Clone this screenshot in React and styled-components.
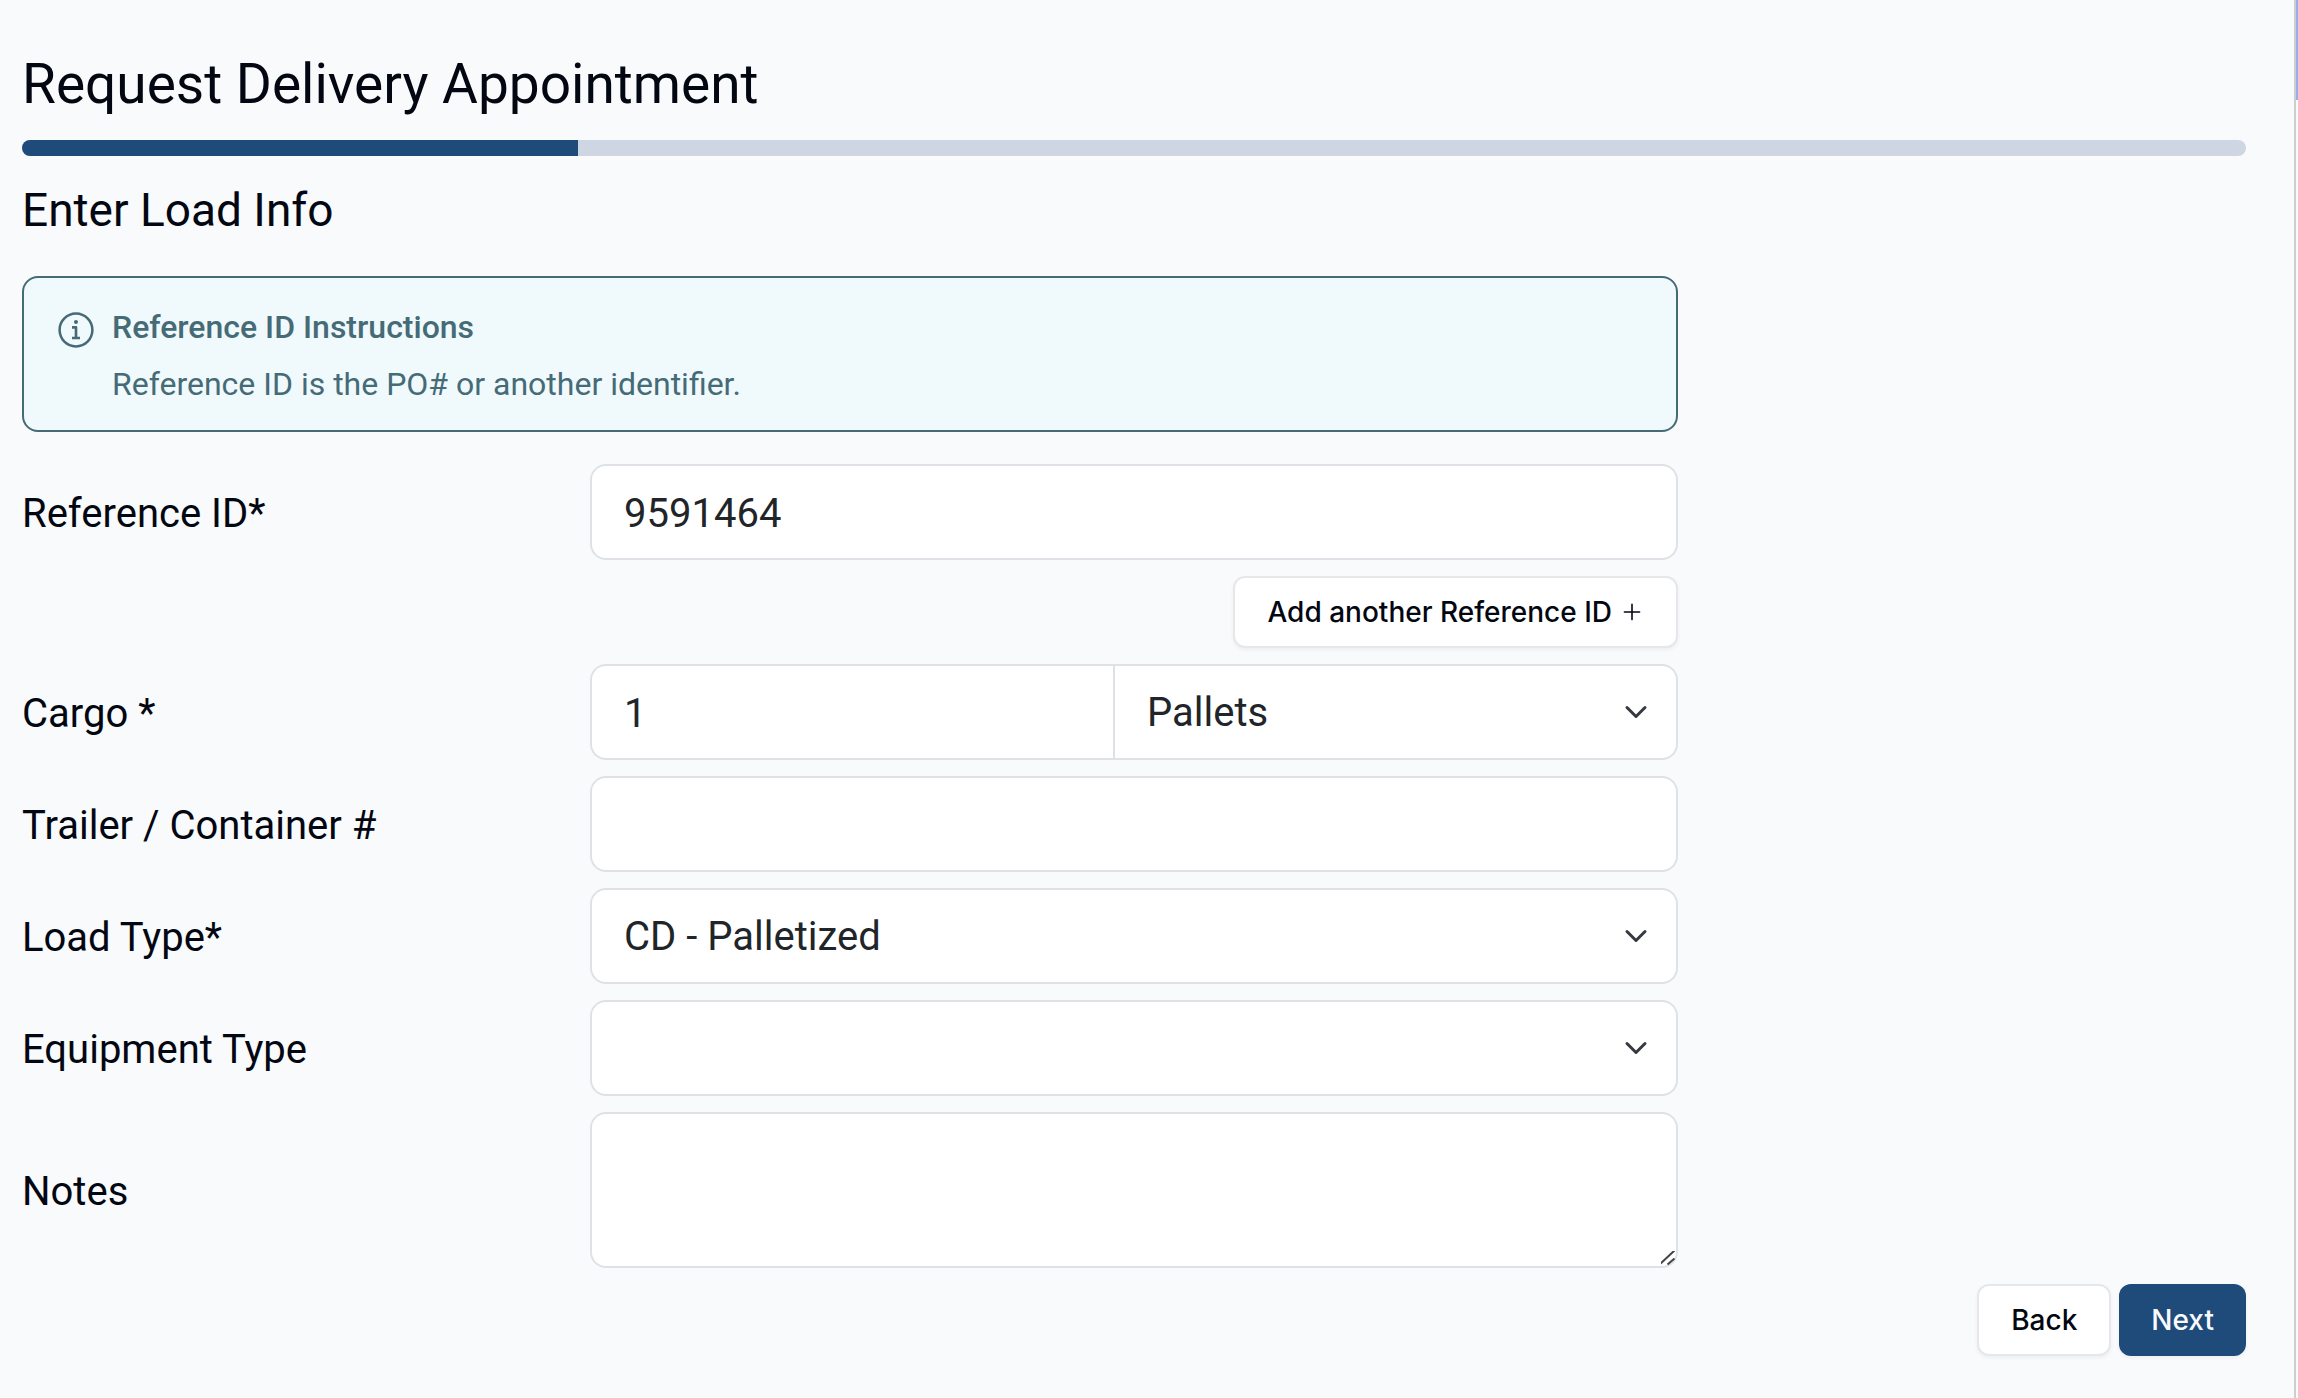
import React, { useState } from 'react';
import styled, { createGlobalStyle } from 'styled-components';
import { RxInfoCircled, RxPlus } from 'react-icons/rx';

const chevron = `url("data:image/svg+xml,%3csvg xmlns='http://www.w3.org/2000/svg' viewBox='0 0 16 16'%3e%3cpath fill='none' stroke='%23343a40' stroke-linecap='round' stroke-linejoin='round' stroke-width='2' d='m2 5 6 6 6-6'/%3e%3c/svg%3e")`;
const grip = `url("data:image/svg+xml,%3csvg xmlns='http://www.w3.org/2000/svg' viewBox='0 0 18 18'%3e%3cpath fill='none' stroke='%23444' stroke-width='2' d='M0 15 15 1M8 15l7-6'/%3e%3c/svg%3e")`;

const GlobalStyle = createGlobalStyle`
    *, *::before, *::after {
        box-sizing: border-box;
    }

    body {
        margin: 0;
        background: #f9fafc;
        color: #030712;
        font-family: Roboto, "Liberation Sans", sans-serif;
        font-size: 40px;
        line-height: 60px;
    }

    input, select, textarea {
        font-family: inherit;
        margin: 0;
    }
`;

const Shell = styled.div`
    display: flex;
    min-height: 100vh;
`;

const Page = styled.main`
    flex: 1;
    min-width: 0;
    padding: 50px 48px 42px 22px;
    border-right: 2px solid #cfcfcf;
`;

const ScrollRail = styled.div`
    width: 2px;
    background: #f9fafc;
`;

const ScrollThumb = styled.div`
    height: 100px;
    background: #94aff0;
`;

const Title = styled.h1`
    margin: 0 0 22px;
    font-size: 55px;
    line-height: 68px;
    font-weight: 400;
`;

const ProgressTrack = styled.div`
    height: 16px;
    border-radius: 8px;
    background: #cdd6e2;
    overflow: hidden;
`;

const ProgressBar = styled.div`
    height: 100%;
    background: #1f4b7b;
`;

const Subtitle = styled.h2`
    margin: 24px 0 36px;
    font-size: 46px;
    line-height: 60px;
    font-weight: 400;
`;

const Fields = styled.div`
    display: flex;
    flex-direction: column;
    gap: 16px;
    width: calc(75% - 12px);
`;

const Alert = styled.div`
    display: flex;
    gap: 16px;
    margin-bottom: 16px;
    padding: 32px 32px 22px;
    border: 2px solid #456b77;
    border-radius: 16px;
    background: #f0f9fc;
    color: #456b77;
    font-size: 32px;

    svg {
        flex: none;
        width: 40px;
        height: 40px;
    }
`;

const AlertTitle = styled.h5`
    margin: 0 0 16px;
    font-size: 32px;
    line-height: 34px;
    font-weight: 500;
`;

const AlertText = styled.div`
    line-height: 48px;
`;

const Row = styled.div`
    display: grid;
    grid-template-columns: 71fr 136fr;
    align-items: center;
`;

const Label = styled.label`
    padding-top: 4px;
`;

const controlStyle = `
    display: block;
    width: 100%;
    min-width: 0;
    height: 96px;
    padding: 17px 32px 15px;
    border: 2px solid #dee2e6;
    border-radius: 16px;
    background-color: #fff;
    color: #212529;
    font-size: 40px;
    line-height: 60px;
`;

const Input = styled.input`
    ${controlStyle}
`;

const Select = styled.select`
    ${controlStyle}
    appearance: none;
    background-image: ${chevron};
    background-repeat: no-repeat;
    background-position: right 28px center;
    background-size: 24px 24px;
`;

const TextArea = styled.textarea`
    ${controlStyle}
    height: 156px;
    resize: vertical;

    &::-webkit-scrollbar {
        width: 18px;
        height: 18px;
    }

    &::-webkit-resizer {
        background: ${grip} center / 18px 18px no-repeat;
    }
`;

const InputGroup = styled.div`
    display: grid;
    grid-template-columns: 25fr 27fr;

    ${Input} {
        border-right: 0;
        border-radius: 16px 0 0 16px;
    }

    ${Select} {
        border-radius: 0 16px 16px 0;
    }
`;

const Button = styled.button`
    display: inline-flex;
    align-items: center;
    gap: 8px;
    height: 72px;
    margin: 0;
    padding: 0 32px;
    border: ${props => props.$primary ? '0' : '2px solid #e5e7eb'};
    border-radius: 12px;
    background: ${props => props.$primary ? '#1f4b7b' : '#fff'};
    color: ${props => props.$primary ? '#f9fafc' : '#030712'};
    box-shadow: 0 2px 4px rgba(0, 0, 0, 0.05);
    font-family: Inter, "Liberation Sans", sans-serif;
    font-size: 28px;
    line-height: 40px;
    font-weight: 500;

    svg {
        width: 24px;
        height: 24px;
    }
`;

const Actions = styled.div`
    display: flex;
    justify-content: flex-end;
    gap: 8px;
`;

const Footer = styled(Actions)`
    margin-top: 16px;
`;

const Field = ({ id, label, children }) => (
    <Row>
        <Label htmlFor={id}>{label}</Label>
        {children}
    </Row>
);

const App = () => {
    const [referenceId, setReferenceId] = useState('9591464');
    const [quantity, setQuantity] = useState('1');
    const [unit, setUnit] = useState('Pallets');
    const [trailer, setTrailer] = useState('');
    const [loadType, setLoadType] = useState('CD - Palletized');
    const [equipment, setEquipment] = useState('');
    const [notes, setNotes] = useState('');
    const progress = 25;

    return (
        <Shell>
            <GlobalStyle />
            <Page>
                <Title>Request Delivery Appointment</Title>
                <ProgressTrack>
                    <ProgressBar style={{ width: `${progress}%` }} />
                </ProgressTrack>
                <Subtitle>Enter Load Info</Subtitle>
                <form onSubmit={e => e.preventDefault()}>
                    <Fields>
                        <Alert role="alert">
                            <RxInfoCircled />
                            <div>
                                <AlertTitle>Reference ID Instructions</AlertTitle>
                                <AlertText>Reference ID is the PO# or another identifier.</AlertText>
                            </div>
                        </Alert>
                        <Field id="reference" label="Reference ID*">
                            <Input id="reference" value={referenceId} onChange={e => setReferenceId(e.target.value)} />
                        </Field>
                        <Actions>
                            <Button type="button">Add another Reference ID <RxPlus /></Button>
                        </Actions>
                        <Field id="cargo" label="Cargo *">
                            <InputGroup>
                                <Input id="cargo" value={quantity} onChange={e => setQuantity(e.target.value)} />
                                <Select aria-label="Cargo unit" value={unit} onChange={e => setUnit(e.target.value)}>
                                    <option>Pallets</option>
                                </Select>
                            </InputGroup>
                        </Field>
                        <Field id="trailer" label="Trailer / Container #">
                            <Input id="trailer" value={trailer} onChange={e => setTrailer(e.target.value)} />
                        </Field>
                        <Field id="load-type" label="Load Type*">
                            <Select id="load-type" value={loadType} onChange={e => setLoadType(e.target.value)}>
                                <option>CD - Palletized</option>
                            </Select>
                        </Field>
                        <Field id="equipment" label="Equipment Type">
                            <Select id="equipment" value={equipment} onChange={e => setEquipment(e.target.value)}>
                                <option value=""></option>
                            </Select>
                        </Field>
                        <Field id="notes" label="Notes">
                            <TextArea id="notes" value={notes} onChange={e => setNotes(e.target.value)} />
                        </Field>
                    </Fields>
                    <Footer>
                        <Button type="button">Back</Button>
                        <Button type="submit" $primary>Next</Button>
                    </Footer>
                </form>
            </Page>
            <ScrollRail>
                <ScrollThumb />
            </ScrollRail>
        </Shell>
    );
};

export default App;
